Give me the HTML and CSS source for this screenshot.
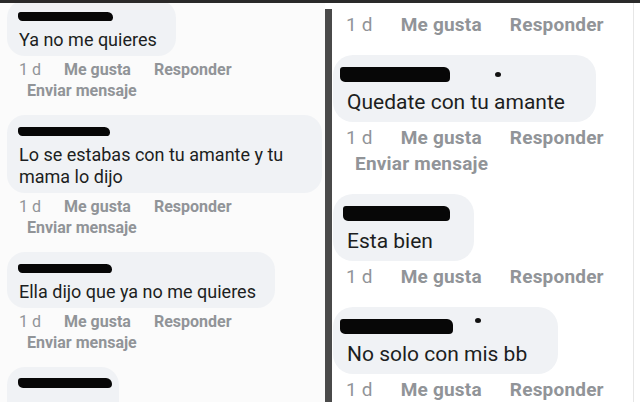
FILE: index.html
```html
<!DOCTYPE html>
<html lang="es">
<head>
    <meta charset="UTF-8">
    <meta name="viewport" content="width=device-width, initial-scale=1.0">
    <title>Comentarios</title>
    <link rel="stylesheet" href="styles.css">
</head>
<body>
    <div class="top-band"></div>

    <div class="board">
        <!-- left screenshot -->
        <section class="panel left">
            <div class="bubble first">
                <div class="name"><span class="redact" style="width:95px"></span></div>
                <div class="text">Ya no me quieres</div>
            </div>
            <div class="actions">
                <span class="time">1 d</span><span class="link">Me gusta</span><span class="link">Responder</span>
            </div>
            <div class="actions second"><span class="link">Enviar mensaje</span></div>

            <div class="bubble wide">
                <div class="name"><span class="redact" style="width:92px"></span></div>
                <div class="text">Lo se estabas con tu amante y tu mama lo dijo</div>
            </div>
            <div class="actions">
                <span class="time">1 d</span><span class="link">Me gusta</span><span class="link">Responder</span>
            </div>
            <div class="actions second"><span class="link">Enviar mensaje</span></div>

            <div class="bubble">
                <div class="name"><span class="redact" style="width:94px"></span></div>
                <div class="text">Ella dijo que ya no me quieres</div>
            </div>
            <div class="actions">
                <span class="time">1 d</span><span class="link">Me gusta</span><span class="link">Responder</span>
            </div>
            <div class="actions second"><span class="link">Enviar mensaje</span></div>

            <div class="bubble">
                <div class="name"><span class="redact tall" style="width:94px"></span></div>
                <div class="text-stub"><i></i><i></i></div>
            </div>
        </section>

        <div class="divider"></div>

        <!-- right screenshot -->
        <section class="panel right">
            <div class="actions">
                <span class="time">1 d</span><span class="link">Me gusta</span><span class="link">Responder</span>
            </div>

            <div class="bubble">
                <div class="name">
                    <span class="redact" style="width:110px"></span>
                    <span class="dot" style="margin-left:45px"></span>
                </div>
                <div class="text">Quedate con tu amante</div>
            </div>
            <div class="actions">
                <span class="time">1 d</span><span class="link">Me gusta</span><span class="link">Responder</span>
            </div>
            <div class="actions second"><span class="link">Enviar mensaje</span></div>

            <div class="bubble">
                <div class="name"><span class="redact shift" style="width:107px"></span></div>
                <div class="text">Esta bien</div>
            </div>
            <div class="actions">
                <span class="time">1 d</span><span class="link">Me gusta</span><span class="link">Responder</span>
            </div>

            <div class="bubble">
                <div class="name">
                    <span class="redact" style="width:113px"></span>
                    <span class="dot" style="margin-left:22px; margin-top:-12px"></span>
                </div>
                <div class="text">No solo con mis bb</div>
            </div>
            <div class="actions">
                <span class="time">1 d</span><span class="link">Me gusta</span><span class="link">Responder</span>
            </div>
        </section>
    </div>
</body>
</html>
```

FILE: styles.css
```css
* {
    margin: 0;
    padding: 0;
    box-sizing: border-box;
}

body {
    background: #ffffff;
    font-family: Roboto, "Liberation Sans", Arial, sans-serif;
    color: #1c1e21;
}

.top-band {
    height: 3px;
    background: #2a2a2a;
}

.board {
    display: flex;
    height: 399px;
}

.panel {
    display: flex;
    flex-direction: column;
    align-items: flex-start;
    overflow: hidden;
}

.left {
    width: 325px;
    padding-left: 7px;
    background: #fbfbfb;
}

.divider {
    width: 7px;
    margin-top: 6px;
    background: #4a4a4a;
}

.right {
    width: 302px;
    padding: 9px 0 0 1px;
    border-right: 1px solid #e6e6e6;
}

/* comment bubble */
.bubble {
    background: #f0f2f5;
    border-radius: 18px;
}

.name {
    display: flex;
    align-items: center;
}

.redact {
    display: block;
    background: #070707;
    border-radius: 3px 6px 4px 5px;
}

.dot {
    display: block;
    width: 6px;
    height: 5px;
    border-radius: 50%;
    background: #111;
}

.actions {
    display: flex;
    color: #919498;
    font-weight: 700;
    white-space: nowrap;
}

.actions .time {
    font-weight: 400;
}

/* left screenshot sizes */
.left .bubble {
    padding: 6px 7px 5px 12px;
    margin-top: 14px;
}

.left .bubble.first {
    margin-top: -3px;
}

.left .bubble.wide {
    width: 315px;
}

.left .name {
    height: 20px;
    margin-left: -1px;
}

.left .redact {
    height: 9px;
}

.left .redact.tall {
    height: 10px;
}

.left .text {
    margin-top: 3px;
    padding-right: 12px;
    font-size: 18px;
    line-height: 22px;
}

.text-stub {
    display: flex;
    gap: 13px;
    height: 25px;
    padding: 10px 0 0 6px;
}

.text-stub i {
    display: block;
    width: 2px;
    height: 3px;
    background: #777;
}

.left .actions {
    margin-top: 3px;
    padding-left: 12px;
    gap: 23px;
    font-size: 16px;
    line-height: 21px;
}

.left .actions.second {
    margin-top: 0;
    padding-left: 20px;
}

/* right screenshot sizes */
.right .bubble {
    padding: 7px;
    margin-top: 15px;
    border-radius: 20px;
}

.right .name {
    height: 25px;
    padding-right: 17px;
}

.right .redact {
    height: 15px;
}

.right .redact.shift {
    margin-left: 3px;
}

.right .text {
    margin-top: 2px;
    padding: 0 24px 0 7px;
    font-size: 21px;
    line-height: 26px;
}

.right .actions {
    margin-top: 3px;
    padding-left: 13px;
    gap: 28px;
    font-size: 19px;
    letter-spacing: 0.2px;
    line-height: 26px;
}

.right .actions:first-child {
    margin-top: 0;
}

.right .actions.second {
    margin-top: 0;
    padding-left: 22px;
}

.right .actions + .bubble {
    margin-top: 17px;
}
```
